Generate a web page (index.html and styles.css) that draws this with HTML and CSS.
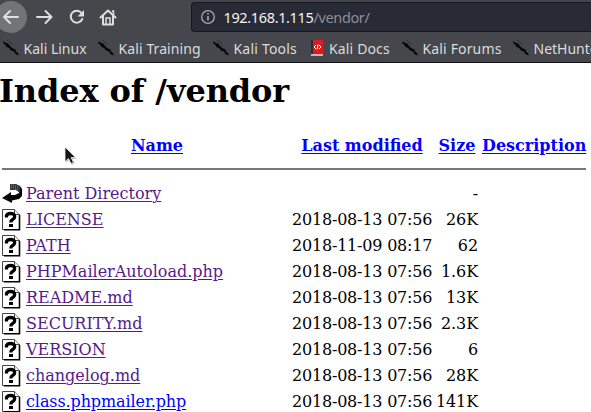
FILE: index.html
```html
<!DOCTYPE html>
<html lang="en">
<head>
<meta charset="utf-8">
<title>Index of /vendor</title>
<link rel="stylesheet" href="styles.css">
</head>
<body>
<svg class="defs" width="0" height="0" aria-hidden="true">
  <symbol id="dragon" viewBox="0 0 16 16">
    <path d="M0 1l3 2 2 .5 3 3.500 2 1.500 2.500 1 .5 2 3 2.500-1 .5.500 1-3-1.500-1.500-2.500-3-1-2-2.500-2.500-1-1-2-2-1.500z" fill="#050607"/>
    <path d="M4 0l4 3M7 2l3 3" stroke="#24272b" stroke-width=".7" fill="none"/>
  </symbol>
  <symbol id="unknown" viewBox="0 0 20 22">
    <path d="M.5 20.500V.5H12.500L17.500 5.500v15z" fill="#fff" stroke="#444"/>
    <path d="M12.500 .5v5h5" fill="#eee" stroke="#444"/>
    <path d="M17.500 6v14.800H2" fill="none" stroke="#000" stroke-width="1.600"/>
    <path d="M4.500 8.500V6.500q1-2 4-2 4.200 0 4.200 3 0 2-2 3-1.900.9-1.900 3" fill="none" stroke="#000" stroke-width="3.300"/>
    <path d="M7 15h4v3H7z" fill="#000"/>
  </symbol>
</svg>
<header class="chrome">
  <div class="toolbar">
    <div class="nav">
      <span class="back"><svg width="27" height="33" viewBox="0 0 27 33"><circle cx="11" cy="17" r="16" fill="#737477"/><path d="M18 17H4M10 11l-6 6 6 6" class="stroke"/></svg></span>
      <svg width="18" height="33" viewBox="0 0 18 33"><path d="M1 17h14M9.500 11l6 6-6 6" class="stroke"/></svg>
      <svg width="16" height="33" viewBox="0 0 16 33"><path d="M12.500 13A6 6 0 1 0 13.300 19" class="stroke"/><path d="M15 10v6.500H8.500z" fill="#dededc"/></svg>
      <svg width="18" height="33" viewBox="0 0 18 33"><path d="M1.500 17.500L9 10.500l7.500 7M4 16v8.500h10V16" class="stroke"/><path d="M7 24v-6h4v6M13 11h1.500v4" fill="none" stroke="#dededc" stroke-width="1.500"/></svg>
    </div>
    <div class="url">
      <svg width="16" height="16" viewBox="0 0 16 16"><circle cx="8" cy="8" r="6.300" fill="none" stroke="#aaabad" stroke-width="1.300"/><path d="M8 7v4.500M8 4v1.600" stroke="#aaabad" stroke-width="1.600"/></svg>
      <span class="address">192.168.1.115<span class="path">/vendor/</span></span>
    </div>
  </div>
  <nav class="bookmarks">
    <span class="mark linux"><svg><use href="#dragon"/></svg><b>Kali Linux</b></span>
    <span class="mark training"><svg><use href="#dragon"/></svg><b>Kali Training</b></span>
    <span class="mark tools"><svg><use href="#dragon"/></svg><b>Kali Tools</b></span>
    <span class="mark docs"><svg viewBox="0 0 16 16"><path d="M2 0h12v16H2z" fill="#e0191a"/><path d="M2 0h2v14H2z" fill="#292b3d"/><path d="M2 14h12v2H2z" fill="#c9b5b5"/><path d="M7 5L5 7l2 2M10 5l2 2-2 2M9 4.500L8 9.500" stroke="#fff" fill="none"/></svg><b>Kali Docs</b></span>
    <span class="mark forums"><svg><use href="#dragon"/></svg><b>Kali Forums</b></span>
    <span class="mark hunter"><svg><use href="#dragon"/></svg><b>NetHunter</b></span>
  </nav>
</header>
<main>
  <h1>Index of /vendor</h1>
  <div class="row head"><i></i><a href="#">Name</a><a href="#">Last modified</a><a href="#">Size</a><a href="#">Description</a></div>
  <hr>
  <div class="row"><svg class="icon" viewBox="0 0 20 22"><path d="M18 3l2 3v7l-3 3-7 1.500v2.500L0 15l9-6v3h4l4-2V7z" fill="#050505"/><path d="M8 1l6 0 4 2v7l-4-3H8z" fill="#333"/><path d="M9.500 1v5M11.500 1v5M13.500 2v5M15.500 3v4" stroke="#888" stroke-width=".5"/></svg><span><a class="seen" href="#">Parent Directory</a></span><span></span><span class="size">-</span></div>
  <div class="row"><svg class="icon"><use href="#unknown"/></svg><span><a class="seen" href="#">LICENSE</a></span><span class="date">2018-08-13 07:56</span><span class="size">26K</span></div>
  <div class="row"><svg class="icon"><use href="#unknown"/></svg><span><a class="seen" href="#">PATH</a></span><span class="date">2018-11-09 08:17</span><span class="size">62</span></div>
  <div class="row"><svg class="icon"><use href="#unknown"/></svg><span><a class="seen" href="#">PHPMailerAutoload.php</a></span><span class="date">2018-08-13 07:56</span><span class="size">1.6K</span></div>
  <div class="row"><svg class="icon"><use href="#unknown"/></svg><span><a class="seen" href="#">README.md</a></span><span class="date">2018-08-13 07:56</span><span class="size">13K</span></div>
  <div class="row"><svg class="icon"><use href="#unknown"/></svg><span><a class="seen" href="#">SECURITY.md</a></span><span class="date">2018-08-13 07:56</span><span class="size">2.3K</span></div>
  <div class="row"><svg class="icon"><use href="#unknown"/></svg><span><a class="seen" href="#">VERSION</a></span><span class="date">2018-08-13 07:56</span><span class="size">6</span></div>
  <div class="row"><svg class="icon"><use href="#unknown"/></svg><span><a class="seen" href="#">changelog.md</a></span><span class="date">2018-08-13 07:56</span><span class="size">28K</span></div>
  <div class="row"><svg class="icon"><use href="#unknown"/></svg><span><a class="mailer" href="#">class.phpmailer.php</a></span><span class="date">2018-08-13 07:56</span><span class="size">141K</span></div>
</main>
<svg class="cursor" width="14" height="20" viewBox="0 0 14 20"><path d="M1 1v15l3.500-3 2.500 5 3-1.500-2.500-4.500H12z" fill="#bbb" transform="translate(.8 .8)"/><path d="M1 1v14.500l3.500-3 2.500 5 2.500-1.200-2.500-4.800h4.500z" fill="#151515" stroke="#eee" stroke-width=".8"/></svg>
</body>
</html>
```

FILE: styles.css
```css
* { box-sizing: border-box; }
body {
  margin: 0;
  height: 412px;
  overflow: hidden;
  position: relative;
  background: #fff;
  color: #000;
  font: 16px/26px "DejaVu Serif", serif;
}
.defs { position: absolute; }
.chrome {
  height: 63px;
  overflow: hidden;
  background: #45474d;
  border-bottom: 1px solid #0e0e10;
  font-family: "Noto Sans", sans-serif;
}
.toolbar { display: flex; height: 34px; }
.nav { display: flex; width: 191px; flex: none; }
.nav > svg { margin-right: 14.5px; flex: none; }
.back {
  display: flex;
  width: 27px;
  height: 33px;
  margin-right: 9px;
  flex: none;
}
.stroke {
  fill: none;
  stroke: #dededc;
  stroke-width: 2;
  stroke-linecap: round;
  stroke-linejoin: round;
}
.url {
  display: flex;
  align-items: center;
  gap: 7.500px;
  flex: 1;
  height: 30px;
  margin-top: 2px;
  padding-left: 8px;
  background: #282a35;
  border: 1px solid #17181d;
  border-right: 0;
  border-radius: 4px 0 0 4px;
  font-size: 14.500px;
  letter-spacing: -.36px;
  color: #f4f4f4;
}
.address { white-space: nowrap; }
.path { color: #8d8e93; }
.bookmarks {
  display: flex;
  height: 28px;
  padding-left: 3px;
  color: #dcdcda;
  font-size: 14px;
  line-height: 29px;
}
.mark { display: flex; align-items: center; flex: none; gap: 4.500px; white-space: nowrap; }
.mark svg { width: 16px; height: 16px; }
.mark b { font-weight: 400; }
.linux { width: 95px; }
.training { width: 115px; letter-spacing: .1px; }
.tools { width: 96px; letter-spacing: .2px; }
.docs { width: 93px; gap: 4px; letter-spacing: .15px; }
.forums { width: 111px; letter-spacing: .15px; }
h1 {
  margin: 0 0 0 -1px;
  height: 70px;
  padding-top: 7px;
  font-size: 32px;
  line-height: 43px;
  letter-spacing: -.12px;
  white-space: nowrap;
}
.row {
  display: grid;
  grid-template-columns: 20px 262px 140px 42px 104px;
  column-gap: 4px;
  align-items: center;
  height: 26px;
  padding-left: 2px;
  white-space: nowrap;
}
.head { text-align: center; font-weight: 700; }
hr { width: 584px; height: 2px; margin: 9px 0 11px 2px; border: 0; background: #777; }
a { color: #00f; text-decoration-thickness: 1px; text-underline-offset: 2px; }
a.seen { color: #551a8b; }
.mailer { letter-spacing: -.1px; }
.date { letter-spacing: -.2px; }
.size { justify-self: end; letter-spacing: -.1px; }
.icon { width: 20px; height: 22px; }
.cursor { position: absolute; left: 64px; top: 146px; }
```
